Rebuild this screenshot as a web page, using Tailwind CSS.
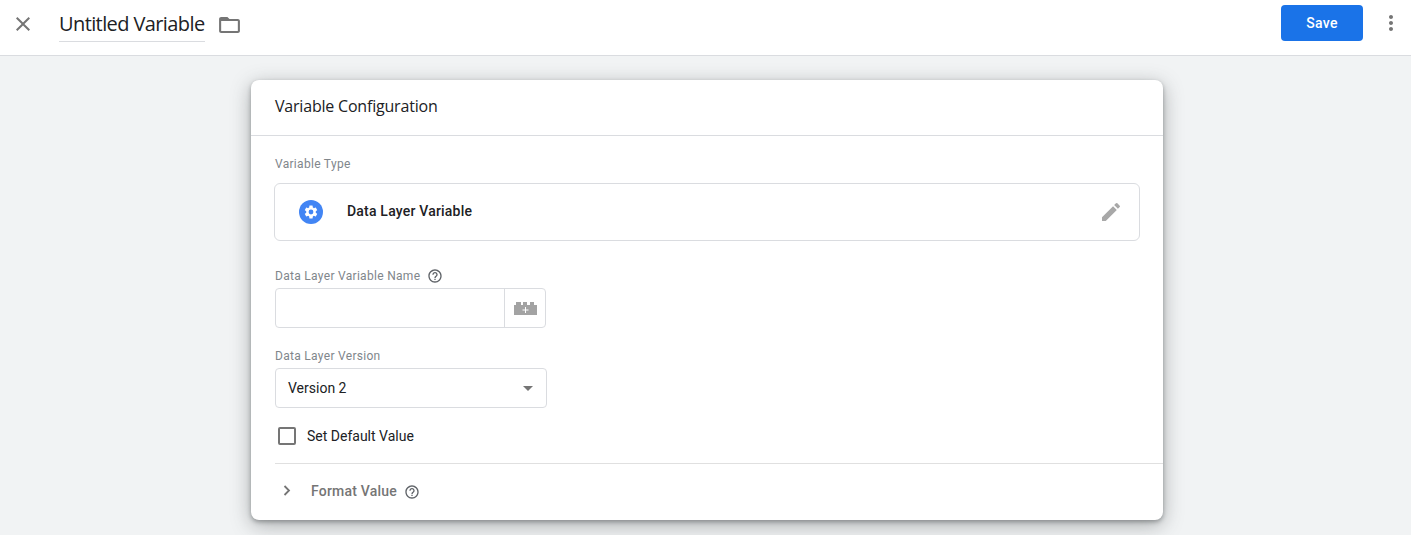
<!DOCTYPE html>
<html lang="en">
<head>
    <meta charset="UTF-8">
    <title>Untitled Variable</title>
    <script src="https://cdn.jsdelivr.net/npm/@tailwindcss/browser@4"></script>
</head>
<body class="h-[535px] overflow-hidden bg-[#f1f3f4] font-['Roboto',sans-serif] text-[#202124]">
    <header class="h-14 pb-2 flex items-center bg-white border-b border-[#dadce0]">
        <button class="ml-[11px] w-6 h-6 flex items-center justify-center">
            <svg class="w-6 h-6 fill-[#757575]" viewBox="0 0 24 24"><path d="M19 6.41 17.59 5 12 10.59 6.41 5 5 6.41 10.59 12 5 17.59 6.41 19 12 13.41 17.59 19 19 17.59 13.41 12z"/></svg>
        </button>
        <div class="ml-[24px] w-[146px] h-10 mb-[3px] border-b border-[#dadce0] font-['Open_Sans',sans-serif] text-[20px] leading-[43px] tracking-[-0.6px] whitespace-nowrap">Untitled Variable</div>
        <svg class="ml-[12px] w-[25px] h-6 fill-[#757575] mt-[3px]" viewBox="0 0 24 24" preserveAspectRatio="none"><path d="M20 6h-8l-2-2H4c-1.1 0-2 .9-2 2v12c0 1.1.9 2 2 2h16c1.1 0 2-.9 2-2V8c0-1.1-.9-2-2-2zm0 12H4V8h16v10z"/></svg>
        <button class="ml-auto mb-[1px] w-[82px] h-9 rounded bg-[#1a73e8] text-white text-sm font-medium tracking-[0.25px]">Save</button>
        <svg class="ml-[16px] mr-[8px] mb-[1px] w-6 h-6 fill-[#757575]" viewBox="0 0 24 24"><path d="M12 8c1.1 0 2-.9 2-2s-.9-2-2-2-2 .9-2 2 .9 2 2 2zm0 2c-1.1 0-2 .9-2 2s.9 2 2 2 2-.9 2-2-.9-2-2-2zm0 6c-1.1 0-2 .9-2 2s.9 2 2 2 2-.9 2-2-.9-2-2-2z"/></svg>
    </header>

    <main class="ml-[251px] mt-6 w-[912px] h-[440px] bg-white rounded-lg shadow-[0_5px_20px_rgba(60,64,67,0.4),0_2px_4px_rgba(60,64,67,0.4)]">
        <div class="h-[56px] pl-6 flex items-center border-b border-[#dadce0] font-['Open_Sans',sans-serif] text-[16px] tracking-[-0.2px] pb-[4px]">Variable Configuration</div>

        <div class="px-6">
            <div class="pt-[20px] text-xs leading-4 tracking-[0.3px] text-[#80868b]">Variable Type</div>
            <div class="mt-[11px] -mx-[1px] h-[58px] flex items-center border border-[#dadce0] rounded-md pr-[16px]">
                <div class="ml-[24px] w-6 h-6 rounded-full bg-[#4285f4] flex items-center justify-center">
                    <svg class="w-4 h-4 fill-white" viewBox="0 0 24 24"><path d="M19.14 12.94c.04-.3.06-.61.06-.94 0-.32-.02-.64-.07-.94l2.03-1.58a.49.49 0 0 0 .12-.61l-1.92-3.32a.49.49 0 0 0-.59-.22l-2.39.96c-.5-.38-1.03-.7-1.62-.94l-.36-2.54a.48.48 0 0 0-.48-.41h-3.84c-.24 0-.43.17-.47.41l-.36 2.54c-.59.24-1.13.57-1.62.94l-2.39-.96a.48.48 0 0 0-.59.22L2.74 8.87c-.12.21-.08.47.12.61l2.03 1.58c-.05.3-.09.63-.09.94s.02.64.07.94l-2.03 1.58a.49.49 0 0 0-.12.61l1.92 3.32c.12.22.37.29.59.22l2.39-.96c.5.38 1.03.7 1.62.94l.36 2.54c.05.24.24.41.48.41h3.84c.24 0 .44-.17.47-.41l.36-2.54c.59-.24 1.13-.56 1.62-.94l2.39.96c.22.08.47 0 .59-.22l1.92-3.32c.12-.22.07-.47-.12-.61l-2.01-1.58zM12 15.6A3.6 3.6 0 1 1 12 8.4a3.6 3.6 0 0 1 0 7.2z"/></svg>
                </div>
                <span class="ml-[24px] mb-[2px] text-sm font-medium tracking-[0.2px]">Data Layer Variable</span>
                <svg class="ml-auto w-6 h-6 fill-[#a8a8a8]" viewBox="0 0 24 24"><path d="M3 17.25V21h3.75L17.81 9.94l-3.75-3.75L3 17.25zM20.71 7.04a1 1 0 0 0 0-1.41l-2.34-2.34a1 1 0 0 0-1.41 0l-1.83 1.83 3.75 3.75 1.83-1.83z"/></svg>
            </div>

            <div class="mt-[27px] flex items-center h-4 text-xs tracking-[0.3px] text-[#80868b]">
                Data Layer Variable Name
                <svg class="ml-[7px] w-4 h-4 fill-[#5f6368]" viewBox="0 0 24 24"><path d="M11 18h2v-2h-2v2zm1-16C6.48 2 2 6.48 2 12s4.48 10 10 10 10-4.48 10-10S17.52 2 12 2zm0 18c-4.41 0-8-3.59-8-8s3.59-8 8-8 8 3.59 8 8-3.59 8-8 8zm0-14c-2.21 0-4 1.79-4 4h2c0-1.1.9-2 2-2s2 .9 2 2c0 2-3 1.75-3 5h2c0-2.25 3-2.5 3-5 0-2.21-1.79-4-4-4z"/></svg>
            </div>
            <div class="mt-[4px] w-[271px] h-10 flex border border-[#dadce0] rounded">
                <div class="w-[229px] border-r border-[#dadce0]"></div>
                <div class="flex-1 flex items-center justify-center">
                    <svg class="w-[23px] h-[13px] mt-[1px]" viewBox="0 0 23 13"><path class="fill-[#a3a3a3]" d="M0 3h2V0h5v3h2V0h4v3h3V0h4v3h3v10H0z"/><path class="fill-white" d="M11 5h1v2.500h2.500v1H12V11h-1V8.500H8.500v-1H11z"/></svg>
                </div>
            </div>

            <div class="mt-[20px] h-4 leading-4 text-xs tracking-[0.3px] text-[#80868b]">Data Layer Version</div>
            <div class="mt-[4px] w-[272px] h-10 flex items-center border border-[#dadce0] rounded pl-3 text-sm">
                Version 2
                <span class="ml-auto mr-[13px] w-0 h-0 border-x-[5px] border-x-transparent border-t-[5px] border-t-[#757575]"></span>
            </div>

            <label class="mt-[18px] ml-[3px] flex items-center h-[20px] text-sm">
                <span class="w-[18px] h-[18px] border-2 border-[#757575] rounded-[2px]"></span>
                <span class="ml-[11px]">Set Default Value</span>
            </label>
        </div>

        <div class="mt-[17px] ml-6 border-t border-[#e0e0e0] h-[54px] flex items-center text-[#757575]">
            <svg class="w-[8px] h-[11px] ml-[8px] mb-[1px] fill-none stroke-[#757575] stroke-[1.8]" viewBox="0 0 8 11"><path d="M1.500 1 6 5.500 1.500 10"/></svg>
            <span class="ml-[20px] text-sm font-medium tracking-[0.2px]">Format Value</span>
            <svg class="ml-[7px] mt-[2px] w-4 h-4 fill-[#5f6368]" viewBox="0 0 24 24"><path d="M11 18h2v-2h-2v2zm1-16C6.48 2 2 6.48 2 12s4.48 10 10 10 10-4.48 10-10S17.52 2 12 2zm0 18c-4.41 0-8-3.59-8-8s3.59-8 8-8 8 3.59 8 8-3.59 8-8 8zm0-14c-2.21 0-4 1.79-4 4h2c0-1.1.9-2 2-2s2 .9 2 2c0 2-3 1.75-3 5h2c0-2.25 3-2.5 3-5 0-2.21-1.79-4-4-4z"/></svg>
        </div>
    </main>
</body>
</html>
